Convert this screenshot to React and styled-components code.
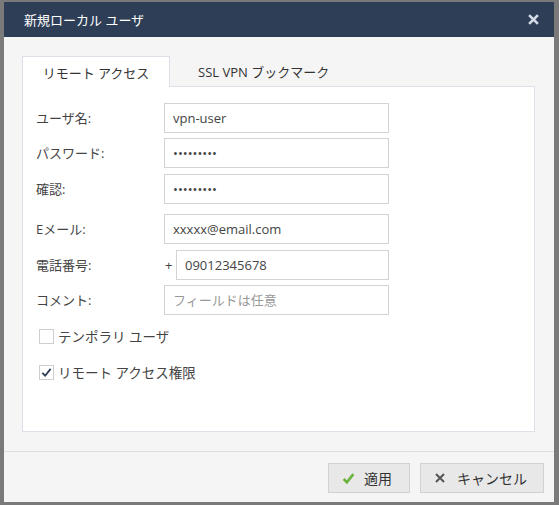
import React from "react";
import styled, { createGlobalStyle } from "styled-components";

const Global = createGlobalStyle`
  html, body { margin: 0; padding: 0; background: #7a7a7a; }
  body { font-family: "Open Sans", "Noto Sans CJK JP", sans-serif; }
  * { box-sizing: border-box; }
`;

const Page = styled.div`
  padding: 2px 0 0 4px;
  width: 559px;
  height: 505px;
`;

const Dialog = styled.div`
  width: 550px;
  height: 500px;
  background: #f5f5f5;
  display: flex;
  flex-direction: column;
`;

const Header = styled.div`
  height: 35px;
  background: #2e3e57;
  color: #ffffff;
  display: flex;
  align-items: center;
  justify-content: space-between;
  padding: 0 14px 0 20px;
  font-size: 13px;
`;

const Close = styled.button`
  border: 0;
  background: none;
  padding: 0;
  width: 14px;
  height: 14px;
  display: flex;
  align-items: center;
  justify-content: center;
  cursor: pointer;
`;

const Body = styled.div`
  flex: 1;
  padding: 19px 19px 19px 18px;
  display: flex;
  flex-direction: column;
  border-bottom: 1px solid #dedede;
`;

const Tabs = styled.div`
  display: flex;
  height: 30px;
  position: relative;
  z-index: 1;
`;

const Tab = styled.div`
  width: ${(p) => (p.$active ? "148px" : "auto")};
  padding: ${(p) => (p.$active ? "0" : "0 26px 0 27px")};
  height: ${(p) => (p.$active ? "31px" : "30px")};
  display: flex;
  align-items: center;
  justify-content: center;
  font-size: 13px;
  color: #333;
  background: ${(p) => (p.$active ? "#ffffff" : "transparent")};
  border: 1px solid ${(p) => (p.$active ? "#dde1e7" : "transparent")};
  border-bottom: 0;
`;

const Panel = styled.div`
  flex: 1;
  background: #ffffff;
  border: 1px solid #dde1e7;
  padding: 16px 0 0 13px;
  display: flex;
  flex-direction: column;
`;

const Row = styled.div`
  display: flex;
  align-items: center;
  height: 30px;
  margin-top: ${(p) => p.$gap || 0}px;
`;

const Label = styled.div`
  width: 128px;
  font-size: 13px;
  color: #444;
  padding-bottom: 2px;
`;

const Input = styled.input`
  width: ${(p) => p.$w || 225}px;
  height: 30px;
  border: 1px solid #d3d3d3;
  border-radius: 0;
  padding: 0 8px;
  font-family: "Open Sans", "Noto Sans CJK JP", sans-serif;
  font-size: 13px;
  color: #444;
  outline: none;
  background: #fff;
  &::placeholder { color: #999; }
`;

const Plus = styled.span`
  width: 12px;
  font-size: 13px;
  color: #444;
  padding-left: 1px;
`;

const CheckRow = styled.label`
  display: flex;
  align-items: center;
  height: 16px;
  margin-top: ${(p) => p.$gap}px;
  margin-left: 3px;
  font-size: 13.5px;
  color: #444;
  gap: 4px;
`;

const Box = styled.span`
  width: 15px;
  height: 15px;
  border: 1px solid #cfcfcf;
  background: #fff;
  display: flex;
  align-items: center;
  justify-content: center;
`;

const Footer = styled.div`
  height: 50px;
  display: flex;
  justify-content: flex-end;
  align-items: flex-start;
  padding: 11px 10px 0 0;
  gap: 10px;
`;

const Button = styled.button`
  height: 30px;
  width: ${(p) => p.$w}px;
  background: #e8e8e8;
  border: 1px solid #d1d1d1;
  border-radius: 0;
  display: flex;
  align-items: center;
  justify-content: center;
  gap: ${(p) => p.$gap || 9}px;
  font-family: "Open Sans", "Noto Sans CJK JP", sans-serif;
  font-size: 14px;
  color: #333;
  cursor: pointer;
  padding: 0 ${(p) => p.$pr || 0}px 0 0;
`;

const Check = ({ color = "#2e3e57", size = 11, w = 2 }) => (
  <svg width={size} height={size} viewBox="0 0 12 12">
    <path d="M1.5 6.5 L4.5 9.5 L10.5 2" fill="none" stroke={color} strokeWidth={w} />
  </svg>
);

const Cross = ({ color, size, w }) => (
  <svg width={size} height={size} viewBox="0 0 10 10">
    <path d="M1 1 L9 9 M9 1 L1 9" stroke={color} strokeWidth={w} strokeLinecap="butt" />
  </svg>
);

export default function App() {
  return (
    <>
      <Global />
      <Page>
        <Dialog>
          <Header>
            <span>新規ローカル ユーザ</span>
            <Close aria-label="close">
              <Cross color="#d3dbe6" size={11} w={2.4} />
            </Close>
          </Header>
          <Body>
            <Tabs>
              <Tab $active>リモート アクセス</Tab>
              <Tab>SSL VPN ブックマーク</Tab>
            </Tabs>
            <Panel>
              <Row>
                <Label>ユーザ名:</Label>
                <Input readOnly defaultValue="vpn-user" />
              </Row>
              <Row $gap={5}>
                <Label>パスワード:</Label>
                <Input readOnly defaultValue="•••••••••" />
              </Row>
              <Row $gap={6}>
                <Label>確認:</Label>
                <Input readOnly defaultValue="•••••••••" />
              </Row>
              <Row $gap={10}>
                <Label>Eメール:</Label>
                <Input readOnly defaultValue="xxxxx@email.com" />
              </Row>
              <Row $gap={6}>
                <Label>電話番号:</Label>
                <Plus>+</Plus>
                <Input $w={213} readOnly defaultValue="09012345678" />
              </Row>
              <Row $gap={5}>
                <Label>コメント:</Label>
                <Input readOnly placeholder="フィールドは任意" />
              </Row>
              <CheckRow $gap={13}>
                <Box />
                テンポラリ ユーザ
              </CheckRow>
              <CheckRow $gap={20}>
                <Box>
                  <Check />
                </Box>
                リモート アクセス権限
              </CheckRow>
            </Panel>
          </Body>
          <Footer>
            <Button $w={82} $pr={4}>
              <Check color="#6cb33f" size={13} w={2.4} />
              適用
            </Button>
            <Button $w={124} $gap={12} $pr={2}>
              <Cross color="#555" size={10} w={2} />
              キャンセル
            </Button>
          </Footer>
        </Dialog>
      </Page>
    </>
  );
}
